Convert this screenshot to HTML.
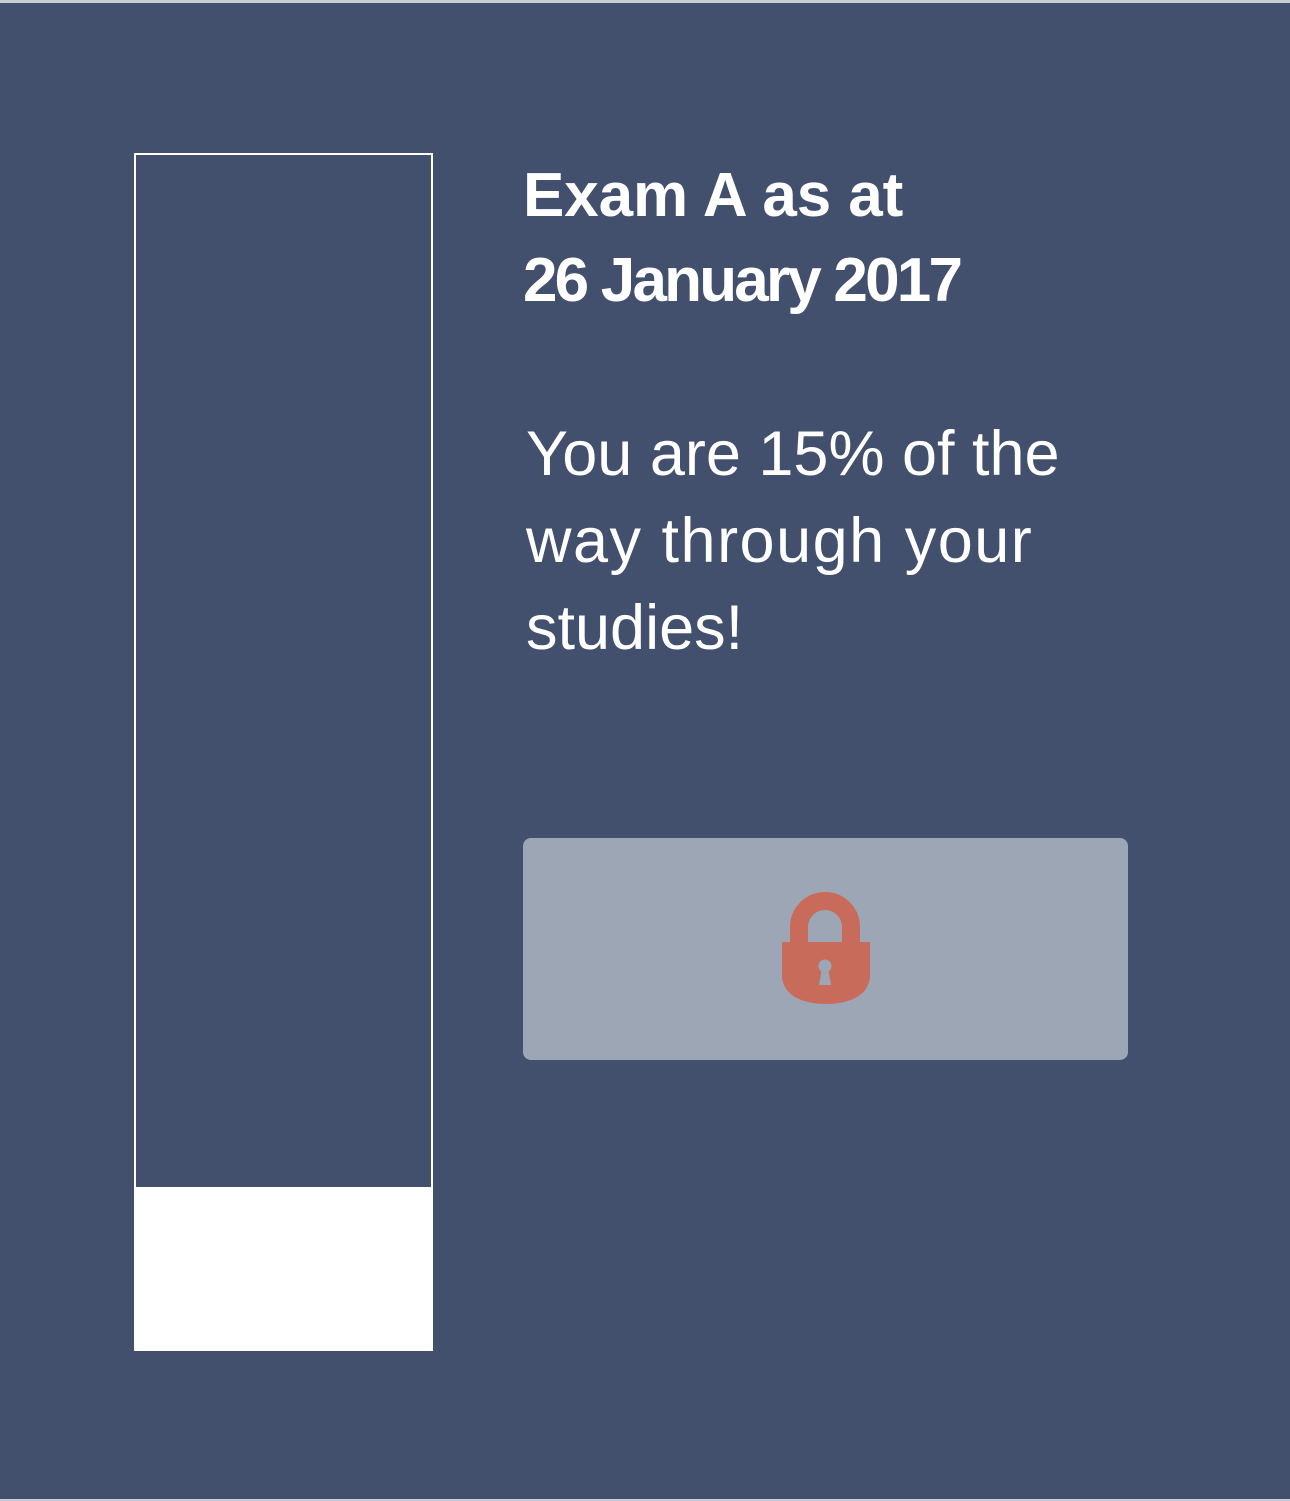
<!DOCTYPE html>
<html><head><style>
html,body{margin:0;padding:0;}
body{width:1290px;height:1501px;background:#c8ccd4;position:relative;overflow:hidden;}
.bg{position:absolute;left:0;top:3px;width:1290px;height:1496px;background:#42506e;}
.bar{position:absolute;left:134px;top:153px;width:295px;height:1194px;border:2px solid #fff;}
.fill{position:absolute;left:134px;top:1187px;width:299px;height:163px;background:#fff;}
.h{position:absolute;left:523px;color:#fff;font-family:"Liberation Sans",sans-serif;font-weight:bold;font-size:62px;letter-spacing:-2.5px;white-space:nowrap;line-height:1;}
.p{position:absolute;left:526px;color:#fff;font-family:"Liberation Sans",sans-serif;font-size:63px;letter-spacing:0px;white-space:nowrap;line-height:1;}
.btn{position:absolute;left:523px;top:838px;width:605px;height:222px;background:#9ca6b5;border-radius:8px;}
</style></head><body>
<div class="bg"></div>
<div class="bar"></div>
<div class="fill"></div>
<div class="h" style="top:165px;letter-spacing:-0.1px">Exam A as at</div>
<div class="h" style="top:250px;letter-spacing:-2.8px">26 January 2017</div>
<div class="p" style="top:423px">You are 15% of the</div>
<div class="p" style="top:510px;letter-spacing:1.5px">way through your</div>
<div class="p" style="top:597px">studies!</div>
<div class="btn"></div>
<svg style="position:absolute;left:0;top:0" width="1290" height="1501">
<path d="M799 942 V927 a26 26 0 0 1 52 0 V942" fill="none" stroke="#c96b5a" stroke-width="18"/>
<path d="M782 942 H870 V975 C870 995 850 1004 826 1004 C802 1004 782 995 782 975 Z" fill="#c96b5a"/>
<circle cx="825" cy="966" r="6.5" fill="#9ca6b5"/>
<path d="M822 968 L828 968 L831 985 L819 985 Z" fill="#9ca6b5"/>
</svg>
</body></html>
